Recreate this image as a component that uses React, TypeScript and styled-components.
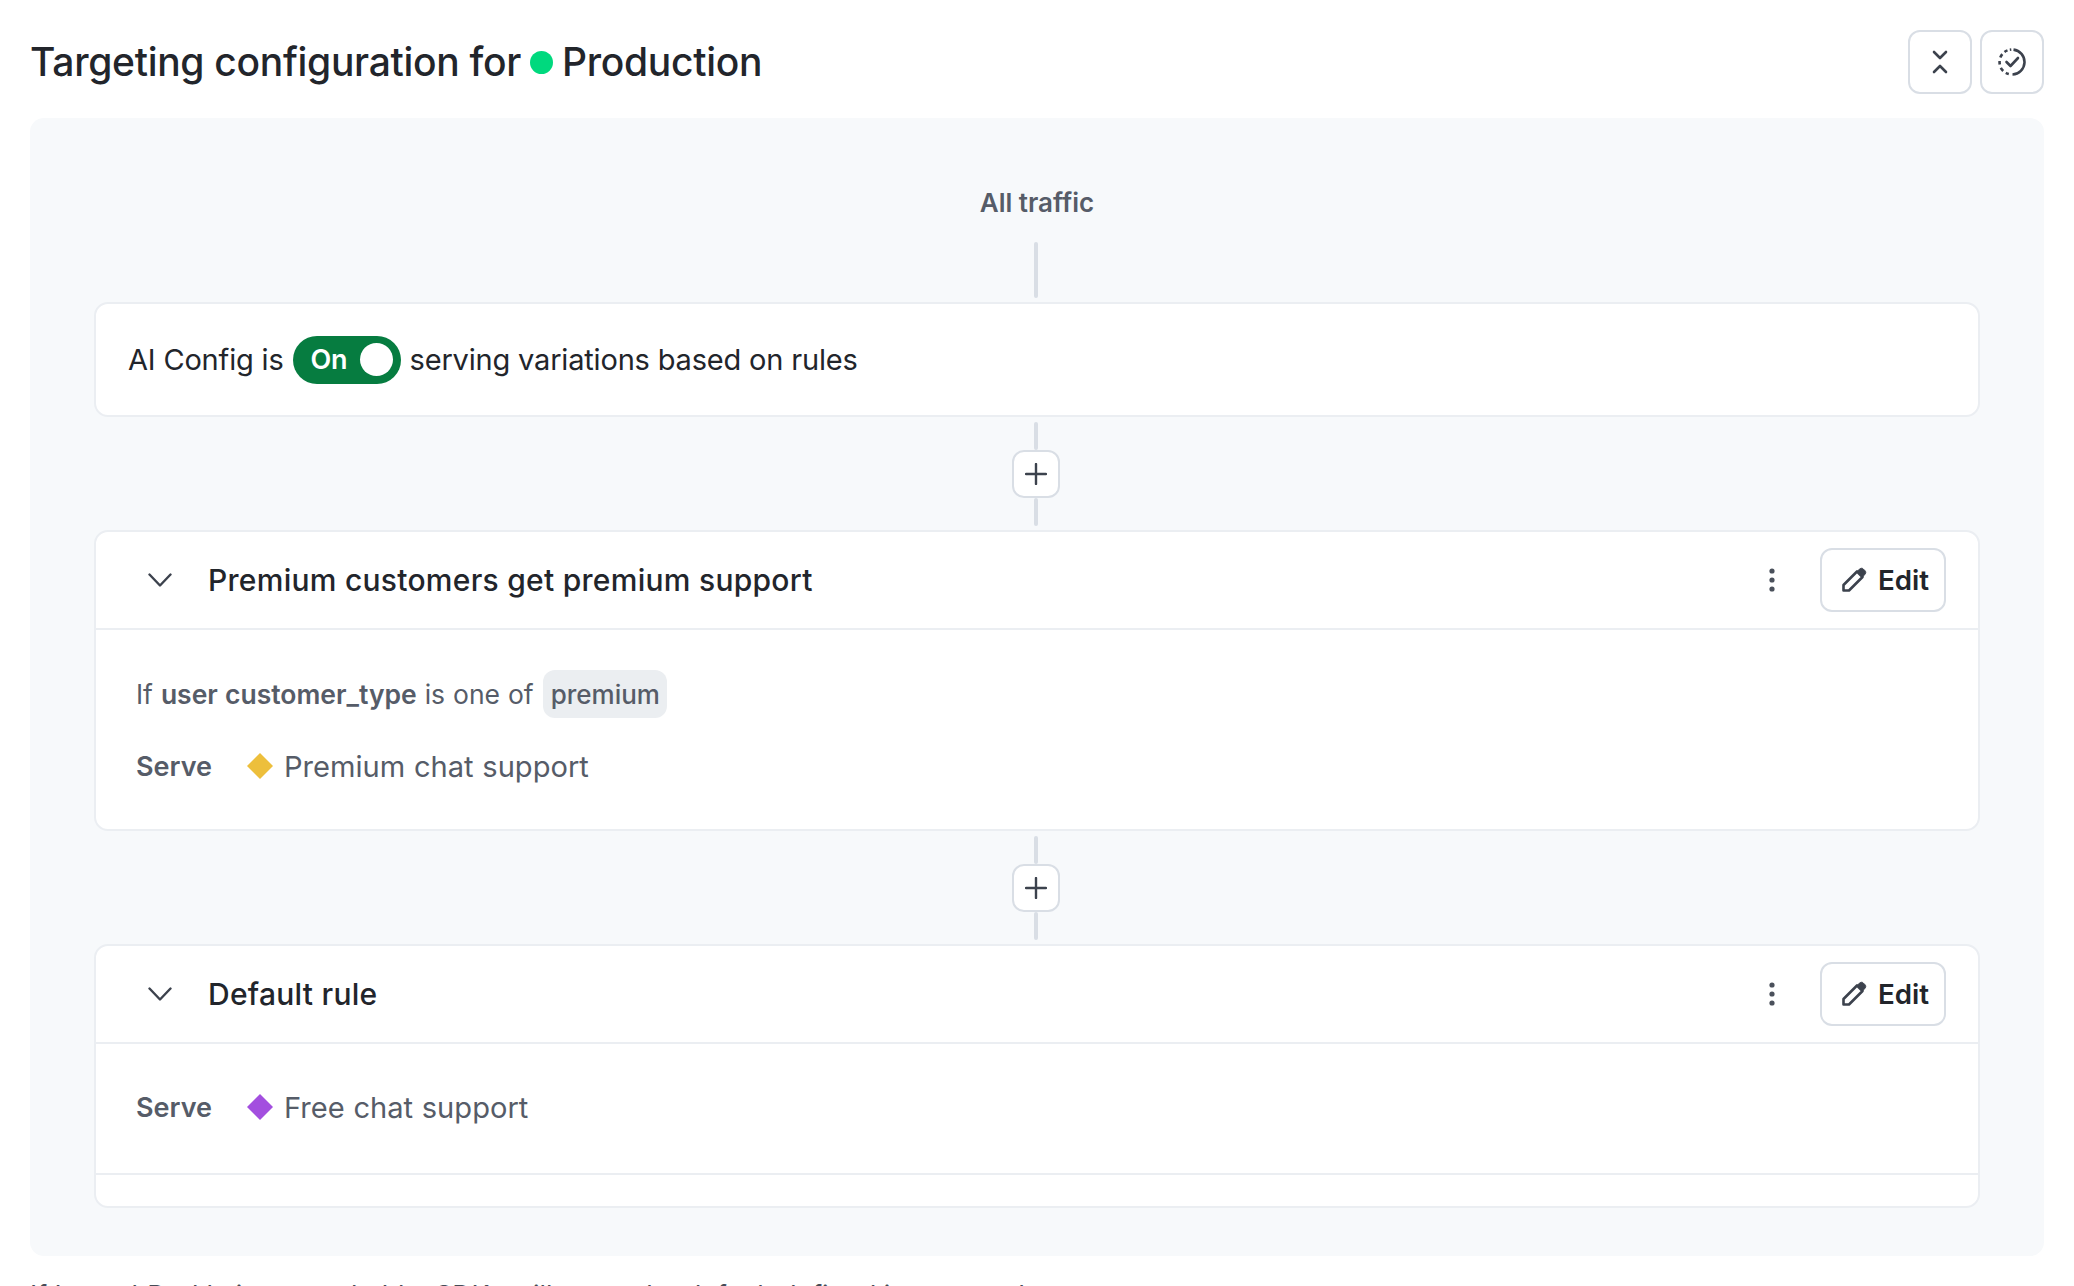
import React from "react";
import styled, { createGlobalStyle } from "styled-components";

const GlobalStyle = createGlobalStyle`
  html, body {
    margin: 0;
    height: 100%;
    overflow: hidden;
    background: #fff;
  }
  body {
    font-family: Inter, "Noto Sans", sans-serif;
    color: #22252b;
  }
`;

const Page = styled.div`
  height: 1286px;
  overflow: hidden;
  padding: 30px 30px 0;
  box-sizing: border-box;
`;

const Header = styled.header`
  display: flex;
  align-items: center;
  justify-content: space-between;
  height: 64px;
  margin-bottom: 24px;
`;

const Title = styled.h1`
  display: flex;
  align-items: center;
  gap: 9px;
  margin: 0;
  font-size: 39px;
  font-weight: 500;
  line-height: 64px;
  letter-spacing: -0.3px;
  color: #22252b;
`;

const StatusDot = styled.span`
  width: 23px;
  height: 23px;
  border-radius: 50%;
  background: #00d97e;
`;

const HeaderActions = styled.div`
  display: flex;
  gap: 8px;
`;

const IconButton = styled.button`
  display: flex;
  align-items: center;
  justify-content: center;
  width: 64px;
  height: 64px;
  padding: 0;
  box-sizing: border-box;
  background: #fff;
  border: 2px solid #d9dee5;
  border-radius: 12px;
  color: #3c424d;
`;

const Panel = styled.section`
  padding: 65px 64px 48px;
  background: #f7f9fb;
  border-radius: 14px;
`;

const TrafficLabel = styled.div`
  font-size: 26px;
  font-weight: 600;
  line-height: 40px;
  text-align: center;
  color: #565c68;
  margin-bottom: 19px;
`;

const Line = styled.span<{ $height: number }>`
  display: block;
  width: 4px;
  height: ${(p) => p.$height}px;
  background: #d9dee5;
  border-radius: 2px;
`;

const Connector = styled.div<{ $top: number; $bottom: number }>`
  display: flex;
  flex-direction: column;
  align-items: center;
  padding: ${(p) => p.$top}px 2px ${(p) => p.$bottom}px 0;
`;

const AddButton = styled.button`
  display: flex;
  align-items: center;
  justify-content: center;
  width: 48px;
  height: 48px;
  padding: 0;
  box-sizing: border-box;
  background: #fff;
  border: 2px solid #d9dee5;
  border-radius: 12px;
  color: #3c424d;
`;

const Card = styled.div`
  background: #fff;
  border: 2px solid #ebeef2;
  border-radius: 14px;
`;

const StatusCard = styled(Card)`
  display: flex;
  align-items: center;
  gap: 9px;
  height: 115px;
  box-sizing: border-box;
  padding: 0 32px;
  font-size: 29px;
  letter-spacing: -0.18px;
  color: #22252b;
`;

const Toggle = styled.span`
  display: flex;
  align-items: center;
  justify-content: space-between;
  width: 108px;
  height: 48px;
  box-sizing: border-box;
  padding: 0 8px 0 18px;
  border-radius: 24px;
  background: #067c40;
  color: #fff;
  font-size: 27px;
  font-weight: 600;
`;

const Knob = styled.span`
  width: 33px;
  height: 33px;
  border-radius: 50%;
  background: #fff;
`;

const RuleHead = styled.div`
  display: flex;
  align-items: center;
  height: 96px;
  padding: 0 32px 0 52px;
  border-bottom: 2px solid #ebeef2;
`;

const Chevron = styled.svg`
  width: 24px;
  height: 14px;
  margin-right: 36px;
  color: #3c424d;
`;

const RuleTitle = styled.div`
  flex: 1;
  font-size: 30px;
  font-weight: 500;
  letter-spacing: 0.27px;
  color: #22252b;
`;

const Kebab = styled.svg`
  width: 8px;
  height: 24px;
  margin-right: 44px;
  color: #4a505b;
`;

const EditButton = styled.button`
  display: flex;
  align-items: center;
  gap: 11px;
  height: 64px;
  width: 126px;
  box-sizing: border-box;
  padding: 0 0 0 19px;
  background: #fff;
  border: 2px solid #d9dee5;
  border-radius: 12px;
  font-family: inherit;
  font-size: 27.7px;
  font-weight: 600;
  color: #22252b;
`;

const RuleBody = styled.div<{ $top: number; $bottom: number }>`
  display: flex;
  flex-direction: column;
  gap: 24px;
  padding: ${(p) => p.$top}px 40px ${(p) => p.$bottom}px;
`;

const Row = styled.div`
  display: flex;
  align-items: center;
  height: 48px;
  font-size: 26.5px;
  word-spacing: 0.5px;
  color: #565c68;
  white-space: pre;
`;

const Strong = styled.strong`
  font-weight: 600;
`;

const Chip = styled.span`
  display: flex;
  align-items: center;
  height: 48px;
  margin-left: 9px;
  padding: 0 7px 0 8px;
  border-radius: 12px;
  background: #ebeef1;
  font-size: 26px;
  font-weight: 500;
`;

const ServeLabel = styled.span`
  width: 111px;
  font-size: 27px;
  font-weight: 600;
`;

const Diamond = styled.svg`
  width: 26px;
  height: 26px;
  margin-right: 11px;
`;

const VariationName = styled.span`
  font-size: 29.1px;
  color: #565c68;
`;

const CardFoot = styled.div`
  height: 31px;
  border-top: 2px solid #ebeef2;
`;

const Note = styled.p`
  margin: 19px 0 0;
  font-size: 26.7px;
  line-height: 40px;
  color: #454b56;
`;

const ChevronDown = () => (
  <Chevron viewBox="0 0 24 14" fill="none" stroke="currentColor" strokeWidth="2.4" strokeLinecap="round" strokeLinejoin="round">
    <path d="M1.5 1.5 12 12.5 22.5 1.5" />
  </Chevron>
);

const KebabIcon = () => (
  <Kebab viewBox="0 0 8 24" fill="currentColor">
    <circle cx="4" cy="3" r="2.6" />
    <circle cx="4" cy="12" r="2.6" />
    <circle cx="4" cy="21" r="2.6" />
  </Kebab>
);

const PencilIcon = () => (
  <svg width="26" height="26" viewBox="0 0 26 26" fill="none" stroke="#3c424d" strokeWidth="2.6" strokeLinejoin="round">
    <path d="M2.500 23.500v-5.500L16 4.500l5.500 5.500L8 23.500H2.500Z" />
    <path d="M16.500 4 19 1.800c1-.8 2.400-.7 3.200.1l1.900 1.900c.8.8.9 2.200.1 3.200L22 9.500 16.500 4Z" fill="#3c424d" strokeWidth="1" />
  </svg>
);

const PlusIcon = () => (
  <svg width="22" height="22" viewBox="0 0 22 22" fill="none" stroke="currentColor" strokeWidth="2.4" strokeLinecap="round">
    <path d="M11 1v20M1 11h20" />
  </svg>
);

const RuleHeader = ({ title }: { title: string }) => (
  <RuleHead>
    <ChevronDown />
    <RuleTitle>{title}</RuleTitle>
    <KebabIcon />
    <EditButton>
      <PencilIcon />
      Edit
    </EditButton>
  </RuleHead>
);

const Serve = ({ color, name }: { color: string; name: string }) => (
  <Row>
    <ServeLabel>Serve</ServeLabel>
    <Diamond viewBox="0 0 26 26">
      <path d="M13 0 26 13 13 26 0 13Z" fill={color} />
    </Diamond>
    <VariationName>{name}</VariationName>
  </Row>
);

const AddRule = () => (
  <Connector $top={5} $bottom={4}>
    <Line $height={28} />
    <AddButton>
      <PlusIcon />
    </AddButton>
    <Line $height={28} />
  </Connector>
);

export default function App() {
  return (
    <>
      <GlobalStyle />
      <Page>
        <Header>
          <Title>
            Targeting configuration for
            <StatusDot />
            Production
          </Title>
          <HeaderActions>
            <IconButton>
              <svg width="24" height="24" viewBox="0 0 24 24" fill="none" stroke="currentColor" strokeWidth="2.6" strokeLinecap="round" strokeLinejoin="round">
                <path d="m6 2 6 6 6-6M6 22l6-6 6 6" />
              </svg>
            </IconButton>
            <IconButton>
              <svg width="28" height="28" viewBox="0 0 28 28" fill="none" stroke="currentColor" strokeWidth="2.6" strokeLinejoin="round">
                <path d="M15.500 1.600a12.500 12.500 0 0 1-1 24.900" />
                <path d="M10.800 26.100a12.500 12.500 0 0 1-3-1.200M5.200 23a12.500 12.500 0 0 1-2.400-3.200M1.800 16.500a12.500 12.500 0 0 1-.2-3.500M2.300 9.500a12.500 12.500 0 0 1 2-3.400M6.500 4a12.500 12.500 0 0 1 3-1.600M11.800 1.700l1.500-.2" />
                <path d="m8.500 14 4 4 7.500-8" strokeLinecap="round" />
              </svg>
            </IconButton>
          </HeaderActions>
        </Header>

        <Panel>
          <TrafficLabel>All traffic</TrafficLabel>
          <Connector $top={0} $bottom={4}>
            <Line $height={56} />
          </Connector>

          <StatusCard>
            AI Config is
            <Toggle>
              On
              <Knob />
            </Toggle>
            serving variations based on rules
          </StatusCard>

          <AddRule />

          <Card>
            <RuleHeader title="Premium customers get premium support" />
            <RuleBody $top={40} $bottom={39}>
              <Row>
                If <Strong>user customer_type</Strong> is one of
                <Chip>premium</Chip>
              </Row>
              <Serve color="#edbf3c" name="Premium chat support" />
            </RuleBody>
          </Card>

          <AddRule />

          <Card>
            <RuleHeader title="Default rule" />
            <RuleBody $top={39} $bottom={42}>
              <Serve color="#a34fdf" name="Free chat support" />
            </RuleBody>
            <CardFoot />
          </Card>
        </Panel>

        <Note>If LaunchDarkly is unreachable, SDKs will serve the default defined in your code</Note>
      </Page>
    </>
  );
}
